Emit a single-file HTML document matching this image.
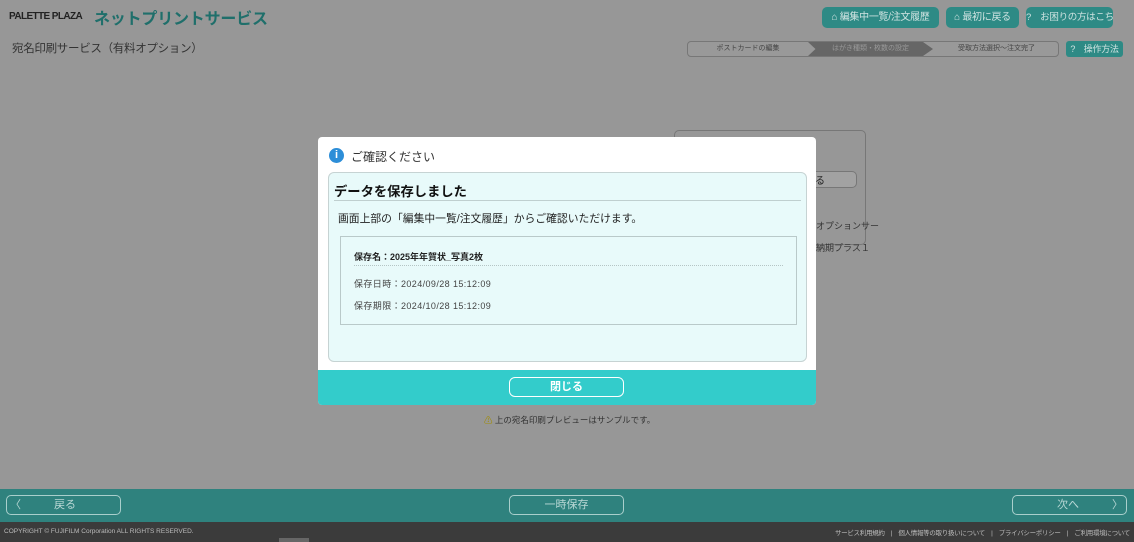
<!DOCTYPE html><html><head><meta charset="utf-8"><style>
*{margin:0;padding:0;box-sizing:border-box}
body{width:1134px;height:542px;position:relative;overflow:hidden;background:#979797;font-family:"Liberation Sans","Noto Sans CJK JP",sans-serif;color:#222}
.a{position:absolute;white-space:nowrap}
.tb{position:absolute;background:#2e8a85;color:#cfe3e1;border-radius:5px;font-size:10px;line-height:21px;height:21px;text-align:center;white-space:nowrap;overflow:hidden;letter-spacing:-0.3px}
.fb{position:absolute;border:1px solid #a9cfcc;border-radius:5px;color:#b9d8d5;font-size:11px;height:20px;line-height:18px;text-align:center;white-space:nowrap}
</style></head><body>
<div class="a" style="left:9px;top:11px;font-size:10px;font-weight:bold;letter-spacing:-0.6px;color:#222">PALETTE PLAZA</div>
<div class="a" style="left:94px;top:5px;font-size:16px;font-weight:bold;color:#1f6f6b;letter-spacing:-0.2px">ネットプリントサービス</div>
<div class="a" style="left:12px;top:40px;font-size:11.5px;color:#333;letter-spacing:-0.3px">宛名印刷サービス（有料オプション）</div>
<div class="tb" style="left:822px;top:7px;width:117px">⌂ 編集中一覧/注文履歴</div>
<div class="tb" style="left:946px;top:7px;width:73px">⌂ 最初に戻る</div>
<div class="tb" style="left:1026px;top:7px;width:87px;font-size:9.5px">?　お困りの方はこちら</div>
<div class="a" style="left:687px;top:41px;width:372px;height:16px;border:1px solid #777;border-radius:4px;background:#999;font-size:7px;color:#444;line-height:14px">
<span class="a" style="left:0;width:120px;text-align:center">ポストカードの編集</span>
<span class="a" style="left:120px;width:125px;height:14px;background:#666;color:#999;text-align:center;clip-path:polygon(0 0,92% 0,100% 50%,92% 100%,0 100%,6% 50%)">はがき種類・枚数の設定</span>
<span class="a" style="left:245px;width:127px;text-align:center">受取方法選択〜注文完了</span></div>
<div class="tb" style="left:1066px;top:41px;width:57px;height:16px;line-height:16px;font-size:9px;border-radius:3px">?　操作方法</div>
<div class="a" style="left:674px;top:130px;width:192px;height:115px;border:1px solid #777;border-radius:5px"></div>
<div class="a" style="left:800px;top:171px;width:57px;height:17px;border:1px solid #777;border-radius:5px;background:#a2a2a2;font-size:10px;padding-left:14px">る</div>
<div class="a" style="left:816px;top:219px;font-size:9px;color:#333">オプションサー</div>
<div class="a" style="left:816px;top:241px;font-size:9px;color:#333">納期プラス１</div>
<div class="a" style="left:484px;top:414px;font-size:8.5px;color:#333"><span style="color:#a08c00">⚠</span> 上の宛名印刷プレビューはサンプルです。</div>
<div class="a" style="left:318px;top:137px;width:498px;height:268px;background:#fff;border-radius:4px;overflow:hidden">
<div class="a" style="left:11px;top:11px;width:15px;height:15px;border-radius:50%;background:#2d8ed8;color:#fff;font-size:11px;font-weight:bold;text-align:center;line-height:15px">i</div>
<div class="a" style="left:33px;top:11px;font-size:12px;color:#333">ご確認ください</div>
<div class="a" style="left:10px;top:35px;width:479px;height:190px;background:#e8fafa;border:1px solid #c6d3d3;border-radius:6px">
<div class="a" style="left:5px;top:8px;font-size:13.3px;font-weight:bold;color:#111">データを保存しました</div>
<div class="a" style="left:5px;top:27px;width:467px;border-top:1px solid #bfcfcf"></div>
<div class="a" style="left:9px;top:37px;font-size:10.8px;color:#222">画面上部の「編集中一覧/注文履歴」からご確認いただけます。</div>
<div class="a" style="left:11px;top:63px;width:457px;height:89px;border:1px solid #b9c9c9">
<div class="a" style="left:13px;top:13px;font-size:9px;font-weight:bold;color:#222">保存名：2025年年賀状_写真2枚</div>
<div class="a" style="left:13px;top:28px;width:429px;border-top:1px dotted #b5c5c5"></div>
<div class="a" style="left:13px;top:40px;font-size:9px;color:#444;letter-spacing:0.4px">保存日時：2024/09/28 15:12:09</div>
<div class="a" style="left:13px;top:62px;font-size:9px;color:#444;letter-spacing:0.4px">保存期限：2024/10/28 15:12:09</div>
</div></div>
<div class="a" style="left:0;top:233px;width:498px;height:35px;background:#33cccb">
<div class="a" style="left:191px;top:7px;width:115px;height:20px;border:1px solid #fff;border-radius:6px;color:#fff;font-size:11px;font-weight:bold;text-align:center;line-height:18px">閉じる</div></div>
</div>
<div class="a" style="left:0;top:489px;width:1134px;height:33px;background:#2f827e"></div>
<div class="fb" style="left:6px;top:495px;width:115px;text-align:left;padding-left:3px">〈　　　戻る</div>
<div class="fb" style="left:509px;top:495px;width:115px">一時保存</div>
<div class="fb" style="left:1012px;top:495px;width:115px;text-align:right;padding-right:3px">次へ　　　〉</div>
<div class="a" style="left:0;top:522px;width:1134px;height:20px;background:#3b3b3b"></div>
<div class="a" style="left:4px;top:528px;font-size:6.5px;color:#bbb">COPYRIGHT © FUJIFILM Corporation ALL RIGHTS RESERVED.</div>
<div class="a" style="right:4px;top:527px;font-size:6.5px;color:#bbb;letter-spacing:-0.3px">サービス利用規約　|　個人情報等の取り扱いについて　|　プライバシーポリシー　|　ご利用環境について</div>
<div class="a" style="left:279px;top:538px;width:30px;height:4px;background:#666"></div>
</body></html>
